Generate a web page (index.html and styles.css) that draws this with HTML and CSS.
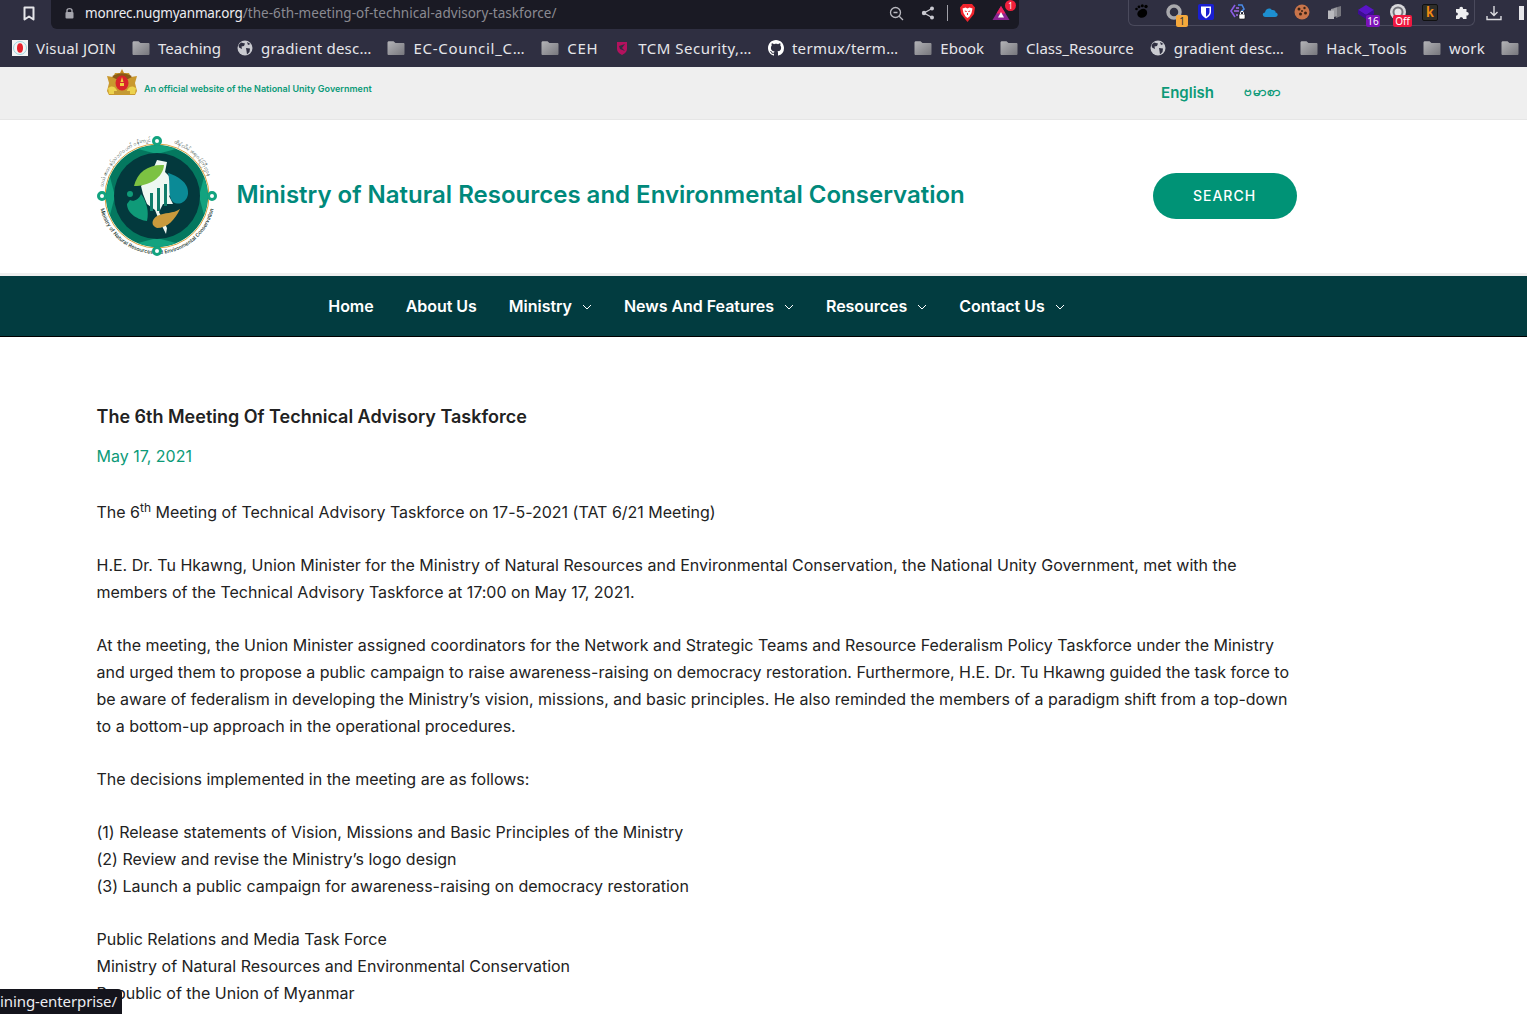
FILE: index.html
```html
<!DOCTYPE html>
<html lang="en">
<head>
   <meta charset="utf-8">
   <title>The 6th Meeting Of Technical Advisory Taskforce</title>
   <link rel="stylesheet" href="styles.css">
</head>
<body>

<svg class="defs" width="0" height="0">
   <defs>
      <linearGradient id="folder-fill" x1="0" y1="0" x2="1" y2="1">
         <stop offset="0" stop-color="#b4b4b8"/>
         <stop offset="1" stop-color="#77777d"/>
      </linearGradient>
      <symbol id="folder" viewBox="0 0 18 16">
         <path d="M0.500 2.500C0.500 2 1 1.200 1.500 1.200H6.500L8.500 3H16.500C17 3 17.500 3.500 17.500 4V14C17.500 14.500 17 15 16.500 15H1.500C1 15 0.500 14.500 0.500 14Z" fill="url(#folder-fill)"/>
      </symbol>
      <symbol id="globe" viewBox="0 0 16 16">
         <circle cx="8" cy="8" r="7.500" fill="#c9cad0"/>
         <path d="M4 2.500L8 3.500L7 6L4.500 6.500L5 9L2 7.500L1.500 5ZM9 8L13 8.500L12.500 12L10 14.500L9.500 11ZM10 2L13.500 4L11 5Z" fill="#2f2f41"/>
      </symbol>
   </defs>
</svg>

<section class="browser">
   <div class="tab-row">
      <div class="star-cell">
         <svg width="12" height="15" viewBox="0 0 12 15"><path d="M1.500 1.500H10.500V13.500L6 10.500L1.500 13.500Z" fill="none" stroke="#e6e6ea" stroke-width="2" stroke-linejoin="round"/></svg>
      </div>
      <div class="url-bar">
         <svg class="lock" width="11" height="12" viewBox="0 0 11 12"><path d="M3 5V3.500C3 1 8 1 8 3.500V5" fill="none" stroke="#a5a5ad" stroke-width="1.400"/><rect x="1.500" y="5" width="8" height="6.500" rx="1" fill="#a5a5ad"/></svg>
         <span class="url-text"><span class="url-host">monrec.nugmyanmar.org</span>/the-6th-meeting-of-technical-advisory-taskforce/</span>
         <div class="url-tools">
            <svg class="zoom-icon" width="15" height="15" viewBox="0 0 15 15"><circle cx="6.500" cy="6.500" r="5" fill="none" stroke="#b9b9c0" stroke-width="1.300"/><path d="M4.500 6.500H8.500M10.200 10.200L14 14" stroke="#b9b9c0" stroke-width="1.300"/></svg>
            <svg class="share-icon" width="14" height="14" viewBox="0 0 14 14"><path d="M11 2.500L3 7L11 11.500" fill="none" stroke="#c9c9d0" stroke-width="1.300"/><circle cx="11" cy="2.500" r="2" fill="#c9c9d0"/><circle cx="3" cy="7" r="2.200" fill="#c9c9d0"/><circle cx="11" cy="11.500" r="2" fill="#c9c9d0"/></svg>
            <span class="url-divider"></span>
            <svg class="brave-icon" width="17" height="20" viewBox="0 0 17 20"><path d="M4 1H13L16 4.500L15 11L8.500 19L2 11L1 4.500Z" fill="#f0242c"/><path d="M3.500 5.500L6.500 4.500L8.500 5.500L10.500 4.500L13.500 5.500L12.500 10L10.500 13.500L8.500 15L6.500 13.500L4.500 10Z" fill="#fff"/><path d="M5.800 8L7.700 8.600M11.200 8L9.300 8.600M8.500 10V12" stroke="#f0242c" stroke-width="1"/></svg>
            <span class="bat-cell">
               <svg width="18" height="16" viewBox="0 0 18 16"><path d="M9 1L17.500 15H0.500Z" fill="#8b2391"/><path d="M9 1L13.500 8.500H4.500Z" fill="#f0245c"/><path d="M9 7L12 12.500H6Z" fill="#fff"/></svg>
               <span class="bat-badge">1</span>
            </span>
         </div>
      </div>
      <div class="ext-box">
         <span class="ext"><svg width="14" height="16" viewBox="0 0 14 16"><path d="M5 6C9 3 13 6 12 10C11 14 5 15 3 12C1.500 9.500 3 7 5 6Z" fill="#000"/><circle cx="1.500" cy="5" r="1.300" fill="#000"/><circle cx="4" cy="2.800" r="1.400" fill="#000"/><circle cx="7.300" cy="1.800" r="1.500" fill="#000"/><circle cx="11" cy="2.500" r="1.700" fill="#000"/></svg></span>
         <span class="ext"><svg width="18" height="18" viewBox="0 0 18 18"><circle cx="9" cy="9" r="6" fill="none" stroke="#a9a9ad" stroke-width="3.500"/></svg><span class="ext-badge badge-orange">1</span></span>
         <span class="ext"><svg width="16" height="16" viewBox="0 0 16 16"><rect width="16" height="16" rx="2" fill="#1a1fd0"/><path d="M3 2.500H13V8C13 11 10.500 13 8 14.500C5.500 13 3 11 3 8Z" fill="#fff"/><path d="M8 4H11.500V8C11.500 10 9.800 11.500 8 12.700Z" fill="#1a1fd0"/></svg></span>
         <span class="ext"><svg width="18" height="18" viewBox="0 0 18 18"><path d="M6 2L2 8L6 14" fill="none" stroke="#8a5ce6" stroke-width="1.600"/><path d="M9 2H13L15 6L12 9" fill="none" stroke="#4a8ae6" stroke-width="1.600"/><path d="M5 8H10M7 5H10M7 12H9" stroke="#a56ce6" stroke-width="1.300"/><rect x="10" y="11" width="6" height="5" rx="1" fill="#fff" stroke="#111" stroke-width=".6"/><path d="M11.500 11V9.500C11.500 8 14.500 8 14.500 9.500V11" fill="none" stroke="#fff"/></svg></span>
         <span class="ext"><svg width="16" height="10" viewBox="0 0 16 10"><path d="M3.500 10C0 10 0 5.500 3 5.500C3.500 2 7.500 0 10 3C13 2.500 14 5 13.500 5.500C16.500 6 16.500 10 13 10Z" fill="#1d8fd0"/></svg></span>
         <span class="ext"><svg width="16" height="16" viewBox="0 0 16 16"><circle cx="8" cy="8" r="7.500" fill="#c8744a"/><circle cx="5" cy="5" r="1.500" fill="#3a2316"/><circle cx="10.500" cy="4" r="1.200" fill="#3a2316"/><circle cx="11.500" cy="9" r="1.500" fill="#3a2316"/><circle cx="6.500" cy="10" r="1.500" fill="#3a2316"/><circle cx="8" cy="7" r="1" fill="#3a2316"/></svg></span>
         <span class="ext"><svg width="15" height="15" viewBox="0 0 15 15"><path d="M7 3L14 1V11L9 13Z" fill="#77777e"/><path d="M4 4L10 2.500V11L4 13Z" fill="#9a9aa0"/><path d="M1 5.500H7V14H1Z" fill="#b9b9be"/></svg></span>
         <span class="ext"><svg width="16" height="14" viewBox="0 0 16 14"><path d="M8 0L16 5L8 10L0 5Z" fill="#5a14c8"/><path d="M0 5L8 10V14L0 9Z" fill="#3d0c96"/><path d="M16 5L8 10V14L16 9Z" fill="#3d0c96"/></svg><span class="ext-badge badge-purple">16</span></span>
         <span class="ext"><svg width="18" height="18" viewBox="0 0 18 18"><circle cx="9" cy="9" r="8" fill="#d9d9dc"/><circle cx="9" cy="9" r="5.500" fill="#75757c"/><circle cx="9" cy="9" r="3.500" fill="#e6e6e8"/></svg><span class="ext-badge badge-red">Off</span></span>
         <span class="ext"><span class="k-icon">k</span></span>
         <span class="ext"><svg width="15" height="15" viewBox="0 0 15 15"><path d="M1 4H4.500C4 1 8.500 1 8 4H11.500V7C14.500 6.500 14.500 11 11.500 10.500V14H8C8.300 11.500 4.200 11.500 4.500 14H1V10.500C3.500 11 3.500 7 1 7.500Z" fill="#eeeef0"/></svg></span>
      </div>
      <div class="chrome-end">
         <svg width="16" height="16" viewBox="0 0 16 16"><path d="M8 1V10M4.500 7L8 10.500L11.500 7M1 11V14.500H15V11" fill="none" stroke="#dcdce0" stroke-width="1.400"/></svg>
         <span class="panel-icon"></span>
      </div>
   </div>
   <div class="bookmarks">
      <a class="mark">
         <svg width="16" height="16" viewBox="0 0 16 16"><rect width="16" height="16" fill="#f4f4f4"/><circle cx="8" cy="8" r="6.500" fill="none" stroke="#9ad6de" stroke-width="1"/><ellipse cx="8" cy="8" rx="3" ry="4.800" fill="#e8222c"/></svg>
         <span class="sp-s">Visual JOIN</span>
      </a>
      <a class="mark"><svg width="18" height="16"><use href="#folder"/></svg>Teaching</a>
      <a class="mark"><svg width="16" height="16"><use href="#globe"/></svg><span class="sp-s">gradient desc…</span></a>
      <a class="mark"><svg width="18" height="16"><use href="#folder"/></svg><span class="sp-l">EC-Council_C…</span></a>
      <a class="mark"><svg width="18" height="16"><use href="#folder"/></svg><span class="sp-l">CEH</span></a>
      <a class="mark">
         <svg width="16" height="16" viewBox="0 0 16 16"><path d="M3 2H13V9C13 12 10 14 8 15C6 14 3 12 3 9Z" fill="#b3125e"/><path d="M5 6L11 4L8 8L11 11L6 9Z" fill="#2f2f41"/></svg>
         <span class="sp-m">TCM Security,…</span>
      </a>
      <a class="mark">
         <svg width="16" height="16" viewBox="0 0 16 16"><path fill="#fff" d="M8 0C3.580 0 0 3.580 0 8c0 3.540 2.290 6.530 5.470 7.590.4.070.55-.17.55-.38 0-.19-.01-.82-.01-1.490-2.010.37-2.530-.49-2.690-.94-.09-.23-.48-.94-.82-1.130-.28-.15-.68-.52-.01-.53.63-.01 1.080.58 1.230.82.72 1.210 1.870.87 2.330.66.070-.52.28-.87.51-1.070-1.780-.2-3.640-.89-3.640-3.950 0-.87.31-1.590.82-2.150-.08-.2-.36-1.020.08-2.120 0 0 .67-.21 2.200.82.64-.18 1.320-.27 2-.27.68 0 1.360.09 2 .27 1.530-1.040 2.200-.82 2.200-.82.44 1.100.16 1.920.08 2.120.51.56.82 1.270.82 2.150 0 3.070-1.870 3.750-3.650 3.950.29.25.54.73.54 1.480 0 1.070-.01 1.930-.01 2.200 0 .21.15.46.55.38A8.013 8.013 0 0016 8c0-4.420-3.580-8-8-8z"/></svg>
         <span class="sp-t">termux/term…</span>
      </a>
      <a class="mark"><svg width="18" height="16"><use href="#folder"/></svg>Ebook</a>
      <a class="mark"><svg width="18" height="16"><use href="#folder"/></svg>Class_Resource</a>
      <a class="mark"><svg width="16" height="16"><use href="#globe"/></svg><span class="sp-s">gradient desc…</span></a>
      <a class="mark"><svg width="18" height="16"><use href="#folder"/></svg><span class="sp-t">Hack_Tools</span></a>
      <a class="mark"><svg width="18" height="16"><use href="#folder"/></svg><span class="sp-s">work</span></a>
      <a class="mark"><svg width="18" height="16"><use href="#folder"/></svg></a>
   </div>
</section>

<section class="top-strip">
   <div class="wrap top-strip-in">
      <div class="official">
         <svg class="emblem" width="30" height="26" viewBox="0 0 30 26">
            <path d="M15 0L17 4H13Z" fill="#c98a1e"/>
            <path d="M8 4H22L24 8L30 7L28 14L30 22L28 26H2L0 22L2 14L0 7L6 8Z" fill="#c9982e"/>
            <path d="M1 19C6 15 10 19 11 25H2ZM29 19C24 15 20 19 19 25H28Z" fill="#ecd24e"/>
            <path d="M5 8C10 3 20 3 25 8L21 10H9Z" fill="#8c5a16"/>
            <ellipse cx="15" cy="14" rx="6.500" ry="7.500" fill="#d8242a"/>
            <path d="M15 8L16.500 13H13.500ZM13 14H17V17H13Z" fill="#f0d040"/>
            <path d="M7 22H23V25H7Z" fill="#c49a34"/>
         </svg>
         <span class="official-text">An official website of the National Unity Government</span>
      </div>
      <div class="langs">
         <a class="lang">English</a>
         <a class="lang lang-mm" lang="my">ဗမာစာ</a>
      </div>
   </div>
</section>

<header class="site-head">
   <div class="wrap site-head-in">
      <div class="brand">
         <svg class="logo" width="120" height="120" viewBox="0 0 120 120">
            <defs>
               <path id="arc-low" d="M2 60A58 58 0 0 0 118 60"/>
               <path id="arc-left" d="M6 52A55 55 0 0 1 55 5"/>
               <path id="arc-right" d="M65 5A55 55 0 0 1 114 52"/>
            </defs>
            <circle cx="60" cy="60" r="52" fill="none" stroke="#d9a441" stroke-width="1"/>
            <circle cx="60" cy="60" r="51" fill="#04785f"/>
            <path d="M41 13A51 51 0 0 1 79 13L60 18ZM41 107A51 51 0 0 0 79 107L60 102ZM13 41A51 51 0 0 0 13 79L18 60ZM107 41A51 51 0 0 1 107 79L102 60Z" fill="#12a37f"/>
            <circle cx="60" cy="60" r="43" fill="#03393d"/>
            <path d="M60 24L70 26L68 36L76 44L78 54L72 60L76 68L66 68L62 76L70 92L69 98L62 84L58 74L50 68L46 58L44 50L54 38Z" fill="#eef8f2"/>
            <path d="M37 50C40 36 52 28 67 29C66 42 52 50 37 50Z" fill="#7cc242"/>
            <path d="M71 37C80 40 92 46 91 58C90 66 82 70 76 66C70 60 74 48 71 37Z" fill="#0b8a96"/>
            <circle cx="33" cy="58" r="3" fill="#0f9a78"/>
            <path d="M33 64C36 66 42 64 44 58C50 66 52 76 50 85C42 84 30 78 30 68Z" fill="#0f9a78"/>
            <path d="M83 73C78 84 70 92 60 92C54 90 54 84 60 80C68 76 76 78 83 73Z" fill="#c99a3c"/>
            <path d="M53 57H56V75H53ZM60 52H63V75H60ZM67 48H70V70H67Z" fill="#0f7d6a"/>
            <text class="logo-ring" lang="my"><textPath href="#arc-left" startOffset="50%" text-anchor="middle">သယံဇာတနှင့်သဘာဝပတ်ဝန်းကျင်</textPath></text>
            <text class="logo-ring" lang="my"><textPath href="#arc-right" startOffset="50%" text-anchor="middle">ထိန်းသိမ်းရေးဝန်ကြီးဌာန</textPath></text>
            <text class="logo-ring"><textPath href="#arc-low" startOffset="50%" text-anchor="middle">Ministry of Natural Resources and Environmental Conservation</textPath></text>
            <g fill="#fff" stroke="#12a37f" stroke-width="3">
               <circle cx="60" cy="5" r="3.500"/>
               <circle cx="5" cy="60" r="3.500"/>
               <circle cx="115" cy="60" r="3.500"/>
               <circle cx="60" cy="115" r="3.500"/>
            </g>
         </svg>
         <span class="brand-name">Ministry of Natural Resources and Environmental Conservation</span>
      </div>
      <a class="search-btn">SEARCH</a>
   </div>
</header>

<nav class="main-nav">
   <div class="wrap main-nav-in">
      <a class="nav-link">Home</a>
      <a class="nav-link">About Us</a>
      <a class="nav-link">Ministry <svg class="chev" width="10" height="6" viewBox="0 0 10 6"><path d="M1 1L5 5L9 1" fill="none" stroke="#fff"/></svg></a>
      <a class="nav-link">News And Features <svg class="chev" width="10" height="6" viewBox="0 0 10 6"><path d="M1 1L5 5L9 1" fill="none" stroke="#fff"/></svg></a>
      <a class="nav-link">Resources <svg class="chev" width="10" height="6" viewBox="0 0 10 6"><path d="M1 1L5 5L9 1" fill="none" stroke="#fff"/></svg></a>
      <a class="nav-link">Contact Us <svg class="chev" width="10" height="6" viewBox="0 0 10 6"><path d="M1 1L5 5L9 1" fill="none" stroke="#fff"/></svg></a>
   </div>
</nav>

<article class="wrap post">
   <h1 class="post-title">The 6th Meeting Of Technical Advisory Taskforce</h1>
   <p class="post-date">May 17, 2021</p>
   <p>The 6<sup>th</sup> Meeting of Technical Advisory Taskforce on 17-5-2021 (TAT 6/21 Meeting)</p>
   <p>H.E. Dr. Tu Hkawng, Union Minister for the Ministry of Natural Resources and Environmental Conservation, the National Unity Government, met with the members of the Technical Advisory Taskforce at 17:00 on May 17, 2021.</p>
   <p>At the meeting, the Union Minister assigned coordinators for the Network and Strategic Teams and Resource Federalism Policy Taskforce under the Ministry and urged them to propose a public campaign to raise awareness-raising on democracy restoration. Furthermore, H.E. Dr. Tu Hkawng guided the task force to be aware of federalism in developing the Ministry’s vision, missions, and basic principles. He also reminded the members of a paradigm shift from a top-down to a bottom-up approach in the operational procedures.</p>
   <p>The decisions implemented in the meeting are as follows:</p>
   <p>(1) Release statements of Vision, Missions and Basic Principles of the Ministry<br>
      (2) Review and revise the Ministry’s logo design<br>
      (3) Launch a public campaign for awareness-raising on democracy restoration</p>
   <p>Public Relations and Media Task Force<br>
      Ministry of Natural Resources and Environmental Conservation<br>
      Republic of the Union of Myanmar</p>
</article>

<div class="link-status">ining-enterprise/</div>

</body>
</html>
```
FILE: styles.css
```css
html, body {
   height: 1014px;
   overflow: hidden;
}

body {
   margin: 0;
   background: #fff;
   color: #222;
   font: normal 16px/27px Inter, "Liberation Sans", sans-serif;
}

a { text-decoration: none; }
.defs { position: absolute; }

/* browser chrome */
.browser {
   height: 67px;
   background: #2f2f41;
   color: #ececf0;
   font-family: "Noto Sans", sans-serif;
   overflow: hidden;
}

.tab-row {
   display: flex;
   height: 29px;
}

.tab-row > * { flex-shrink: 0; }

.star-cell {
   width: 51px;
   display: flex;
   justify-content: center;
   padding-left: 7px;
   box-sizing: border-box;
   padding-top: 6px;
}

.url-bar {
   width: 968px;
   display: flex;
   align-items: center;
   background: #1a1a24;
   border-radius: 0 0 6px 6px;
   padding: 0 0 3px 13px;
   box-sizing: border-box;
   font-size: 13.500px;
   line-height: 26px;
}

.lock { margin-right: 10px; }
.url-text { color: #8a8a92; flex: 1; letter-spacing: .04px; }
.url-host { color: #ececf0; letter-spacing: -.19px; }

.url-tools {
   display: flex;
   align-items: center;
}

.share-icon { margin-left: 17.500px; }

.url-divider {
   width: 1px;
   height: 16px;
   background: #a0a0a8;
   margin: 0 10.500px 0 12px;
}

.bat-cell {
   position: relative;
   display: flex;
   margin: 0 9px 0 16.500px;
}

.bat-badge {
   position: absolute;
   top: -5px;
   right: -6px;
   width: 11px;
   height: 11px;
   border-radius: 50%;
   background: #f0203c;
   color: #fff;
   font-size: 8px;
   line-height: 11px;
   text-align: center;
}

.ext-box {
   display: flex;
   gap: 14px;
   margin-left: 109px;
   width: 347px;
   height: 26px;
   border: 1px solid #4a4a5c;
   border-top: 0;
   border-radius: 0 0 6px 6px;
   box-sizing: border-box;
   padding-left: 4px;
}

.ext {
   position: relative;
   width: 18px;
   height: 25px;
   display: flex;
   align-items: center;
   justify-content: center;
   padding-bottom: 1px;
   box-sizing: border-box;
}

.ext-badge {
   position: absolute;
   top: 15px;
   height: 12px;
   border-radius: 2px;
   color: #fff;
   font-size: 10px;
   line-height: 12px;
   text-align: center;
}

.badge-orange { left: 11px; width: 12px; background: #f5a83c; color: #333; }
.badge-purple { left: 9px; width: 14px; background: #7b12b8; }
.badge-red { left: 4px; width: 19px; background: #f01840; }

.k-icon {
   width: 14px;
   height: 15px;
   background: #2e2e2a;
   border: 1px solid #111;
   border-radius: 2px;
   color: #f08a12;
   font: bold 14px/15px "Liberation Sans", sans-serif;
   text-align: center;
}

.chrome-end {
   display: flex;
   align-items: center;
   height: 26px;
   padding-left: 11px;
   gap: 17px;
}

.panel-icon {
   width: 14px;
   height: 14px;
   border-left: 5px solid #e6e6ea;
   background: #2f2f41;
   box-sizing: border-box;
}

.bookmarks {
   display: flex;
   height: 38px;
   align-items: center;
   padding-left: 12px;
   gap: 16px;
   font-size: 15px;
   white-space: nowrap;
}

.mark {
   display: flex;
   align-items: center;
   gap: 8px;
   color: #e6e6ea;
}

/* label widths of the bookmarks */
.sp-s { letter-spacing: .2px; }
.sp-t { letter-spacing: .3px; }
.sp-m { letter-spacing: .5px; }
.sp-l { letter-spacing: .7px; }

/* site */
.wrap {
   width: 1200px;
   margin-left: 96.500px;
}

.top-strip {
   height: 52px;
   background: #efefef;
   border-bottom: 1px solid #e6e6e6;
}

.top-strip-in {
   display: flex;
   justify-content: space-between;
}

.official {
   display: flex;
   align-items: flex-start;
   padding: 2px 0 0 10.500px;
}

.emblem { display: block; }

.official-text {
   margin: 10px 0 0 7px;
   color: #0c9a78;
   font-size: 9px;
   font-weight: 600;
   line-height: 20px;
}

.langs {
   display: flex;
   gap: 30px;
   padding: 12px 15.500px 0 0;
}

.lang {
   color: #0c9a78;
   font-size: 15px;
   font-weight: 600;
}

.lang-mm {
   margin-top: -1px;
   font-size: 13.400px;
}

.site-head {
   padding-bottom: 2px;
   border-bottom: 3px solid #efefef;
}

.site-head-in {
   display: flex;
   justify-content: space-between;
   align-items: center;
   height: 151px;
}

.brand {
   display: flex;
   align-items: center;
   gap: 20px;
}

.logo { display: block; }

.logo-ring {
   fill: #123029;
   font-size: 5.200px;
   font-weight: 500;
}

.brand-name {
   margin-bottom: 2px;
   color: #00897b;
   font-size: 24px;
   font-weight: 600;
   line-height: 32px;
}

.search-btn {
   display: block;
   width: 144px;
   height: 46px;
   border-radius: 23px;
   background: #009376;
   color: #fff;
   font-size: 14px;
   font-weight: 500;
   letter-spacing: 1px;
   line-height: 46px;
   text-align: center;
}

.main-nav {
   height: 60px;
   background: #023c40;
   border-bottom: 1px solid #000;
}

.main-nav-in {
   display: flex;
   justify-content: center;
   gap: 32px;
}

.nav-link {
   color: #fff;
   font-weight: 600;
   letter-spacing: -.03px;
   line-height: 60px;
   white-space: nowrap;
}

.chev { margin-left: 6px; vertical-align: 2px; }

.post {
   padding-top: 56px;
   letter-spacing: -.005px;
}

.post p {
   margin: 0 0 26px;
}

.post sup { font-size: 12px; line-height: 0; }

.post-title {
   margin: 10px 0 13px;
   font-size: 18px;
   font-weight: 600;
   line-height: 27px;
}

.post .post-date {
   margin-bottom: 29px;
   color: #0c9a78;
}

.link-status {
   position: fixed;
   left: 0;
   bottom: 0;
   height: 25px;
   width: 122px;
   background: #14141c;
   border-radius: 0 4px 0 0;
   color: #ececf0;
   font: 15px/25px "Noto Sans", sans-serif;
   letter-spacing: -.1px;
   white-space: nowrap;
}
```
